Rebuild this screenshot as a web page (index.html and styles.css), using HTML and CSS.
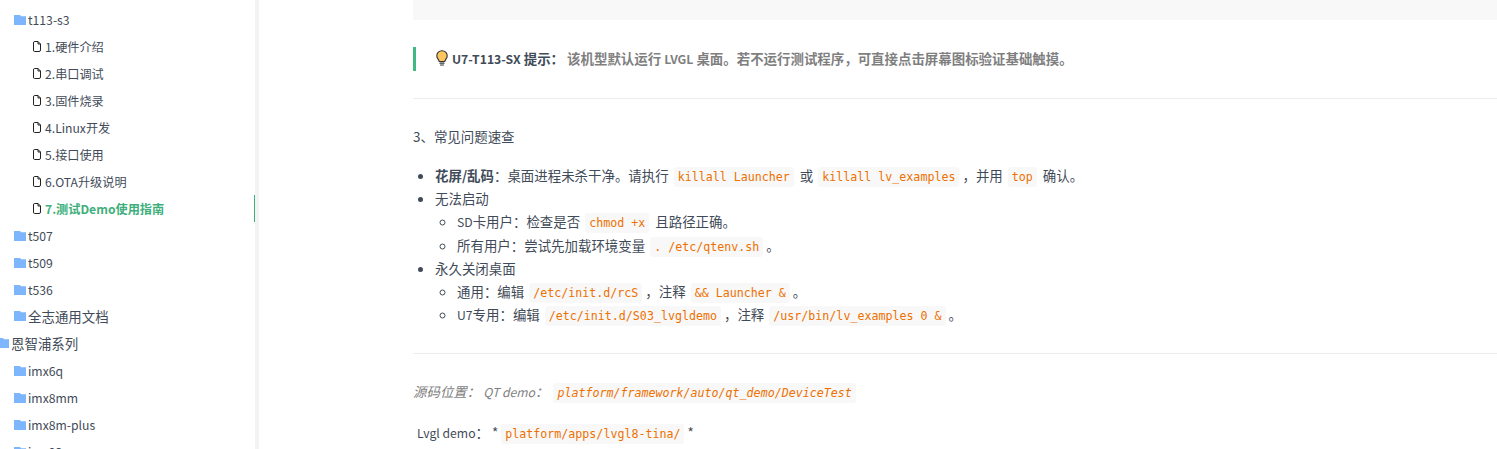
FILE: index.html
```html
<!DOCTYPE html>
<html lang="zh-CN">
<head>
    <meta charset="UTF-8">
    <title>测试Demo使用指南</title>
    <link rel="stylesheet" href="styles.css">
</head>
<body>

<svg class="icon-defs" width="0" height="0">
    <symbol id="folder" viewBox="0 0 12 10">
        <path d="M0 0h6l1.200 1.200h4.800v8.800h-12z" fill="#7db6fc"/>
    </symbol>
    <symbol id="file" viewBox="0 0 8 11">
        <path d="M1.500.5h3.500l2.500 2.500v6q0 1.500-1.500 1.500h-4.500q-1 0-1-1.500v-7q0-1.500 1-1.500zM5 .5v2.500h2.500" fill="none" stroke="#222" stroke-width="1"/>
    </symbol>
</svg>

<div class="page">
    <!-- Sidebar -->
    <aside class="sidebar">
        <ul class="tree">
            <li class="row level-1 latin"><svg class="folder"><use href="#folder"/></svg>t113-s3</li>
            <li class="row level-2"><svg class="file"><use href="#file"/></svg>1.硬件介绍</li>
            <li class="row level-2"><svg class="file"><use href="#file"/></svg>2.串口调试</li>
            <li class="row level-2"><svg class="file"><use href="#file"/></svg>3.固件烧录</li>
            <li class="row level-2"><svg class="file"><use href="#file"/></svg>4.Linux开发</li>
            <li class="row level-2"><svg class="file"><use href="#file"/></svg>5.接口使用</li>
            <li class="row level-2"><svg class="file"><use href="#file"/></svg>6.OTA升级说明</li>
            <li class="row level-2 active"><svg class="file"><use href="#file"/></svg>7.测试Demo使用指南</li>
            <li class="row level-1 latin"><svg class="folder"><use href="#folder"/></svg>t507</li>
            <li class="row level-1 latin"><svg class="folder"><use href="#folder"/></svg>t509</li>
            <li class="row level-1 latin"><svg class="folder"><use href="#folder"/></svg>t536</li>
            <li class="row level-1 cjk"><svg class="folder"><use href="#folder"/></svg>全志通用文档</li>
            <li class="row level-0 cjk"><svg class="folder"><use href="#folder"/></svg>恩智浦系列</li>
            <li class="row level-1 latin"><svg class="folder"><use href="#folder"/></svg>imx6q</li>
            <li class="row level-1 latin"><svg class="folder"><use href="#folder"/></svg>imx8mm</li>
            <li class="row level-1 latin"><svg class="folder"><use href="#folder"/></svg>imx8m-plus</li>
            <li class="row level-1 latin"><svg class="folder"><use href="#folder"/></svg>imx93</li>
        </ul>
    </aside>

    <!-- Main Content -->
    <main class="content">
        <div class="code-block"></div>

        <blockquote class="tip">
            <svg class="bulb" viewBox="0 0 12 16">
                <path d="M6 .7a5.200 5.200 0 0 0-5.200 5.200c0 2.400 2 3.500 2.500 5.600h5.400c.5-2.100 2.500-3.200 2.500-5.600A5.200 5.200 0 0 0 6 .7z" fill="#fcc65c" stroke="#333" stroke-width="1.100"/>
                <path d="M4 13.200h4M4.500 15h3" stroke="#333" stroke-width="1.200" stroke-linecap="round"/>
            </svg>
            <strong class="tip-title"><span class="latin">U7-T113-SX</span> 提示：</strong>
            <strong class="tip-text">该机型默认运行 <span class="latin">LVGL</span> 桌面。若不运行测试程序，可直接点击屏幕图标验证基础触摸。</strong>
        </blockquote>

        <hr class="rule rule-first">

        <p class="para heading-line">3、常见问题速查</p>

        <ul class="list">
            <li><strong>花屏/乱码</strong>：桌面进程未杀干净。请执行 <code>killall Launcher</code> 或 <code>killall lv_examples</code>，并用 <code>top</code> 确认。</li>
            <li>无法启动
                <ul class="sublist">
                    <li><span class="latin">SD</span>卡用户：检查是否 <code>chmod +x</code> 且路径正确。</li>
                    <li>所有用户：尝试先加载环境变量 <code>. /etc/qtenv.sh</code>。</li>
                </ul>
            </li>
            <li>永久关闭桌面
                <ul class="sublist">
                    <li>通用：编辑 <code>/etc/init.d/rcS</code>，注释 <code>&amp;&amp; Launcher &amp;</code>。</li>
                    <li><span class="latin">U7</span>专用：编辑 <code>/etc/init.d/S03_lvgldemo</code>，注释 <code>/usr/bin/lv_examples 0 &amp;</code>。</li>
                </ul>
            </li>
        </ul>

        <hr class="rule rule-second">

        <p class="para source"><em>源码位置： <span class="latin">QT demo</span>： <code>platform/framework/auto/qt_demo/DeviceTest</code></em></p>
        <p class="para lvgl"><span class="latin">Lvgl demo</span>： * <code>platform/apps/lvgl8-tina/</code> *</p>
    </main>
</div>

</body>
</html>
```

FILE: styles.css
```css
body, html {
    height: 100%;
    margin: 0;
    overflow: hidden;
    background-color: #fff;
    color: #3f4b58;
    font-family: "Noto Sans CJK SC", "Noto Sans", sans-serif;
    font-size: 13.44px;
}

.icon-defs {
    display: none;
}

/* Latin runs sit a little smaller than the CJK text */
.latin {
    font-size: 12.2px;
}

.page {
    display: flex;
    height: 100%;
}

/* Sidebar */
.sidebar {
    flex: none;
    width: 255px;
    height: 100%;
    overflow: hidden;
    border-right: 4px solid #f3f3f3;
}

.tree {
    list-style: none;
    margin: 0;
    padding: 6px 0 0;
}

.row {
    display: flex;
    align-items: center;
    box-sizing: border-box;
    height: 27px;
    white-space: nowrap;
}

.cjk {
    padding-bottom: 2px;
}

.level-0 {
    margin-left: -3px;
}

.level-1 {
    padding-left: 14px;
}

.level-2 {
    padding-left: 33px;
    font-size: 12.16px;
}

.folder {
    flex: none;
    width: 12px;
    height: 10px;
    margin-right: 2px;
}

.file {
    flex: none;
    width: 8px;
    height: 11px;
    margin-right: 4px;
}

.active {
    color: #3eaf7c;
    font-weight: 700;
    box-shadow: inset -1px 0 0 #3eaf7c;
}

/* Main */
.content {
    flex: 1;
    min-width: 0;
    padding-left: 154px;
}

.code-block {
    height: 20px;
    background-color: #f8f8f8;
}

.tip {
    display: flex;
    align-items: center;
    box-sizing: border-box;
    height: 24px;
    margin: 27px 0 0;
    padding: 0 0 2px 20px;
    border-left: 3px solid #42b983;
    line-height: 20px;
    white-space: nowrap;
}

.bulb {
    flex: none;
    width: 12px;
    height: 16px;
    margin-right: 4px;
}

.tip-title {
    margin-right: 3px;
}

.tip-text {
    color: #7f7f7f;
}

.rule {
    height: 1px;
    margin: 0;
    border: 0;
    background-color: #eaecef;
}

.rule-first {
    margin-top: 27px;
}

.para {
    margin: 0;
    white-space: nowrap;
}

.heading-line {
    margin-top: 27px;
    line-height: 20px;
}

.list {
    margin: 18px 0 0;
    padding-left: 22px;
    line-height: 23.05px;
    white-space: nowrap;
}

.sublist {
    margin: 0;
    padding-left: 22px;
    list-style: circle;
}

.rule-second {
    margin-top: 26px;
}

code {
    padding: 3px 4px;
    margin: 0 3px 0 2px;
    border-radius: 3px;
    background-color: #f8f8f8;
    color: #ee7000;
    font-family: "DejaVu Sans Mono", monospace;
    font-size: 11.65px;
    line-height: 1;
}

.source {
    margin-top: 27px;
    line-height: 20px;
    color: #7f7f7f;
}

.lvgl {
    margin-top: 20px;
    padding-left: 4px;
    line-height: 20px;
}

.lvgl code {
    margin: 0;
}
```
